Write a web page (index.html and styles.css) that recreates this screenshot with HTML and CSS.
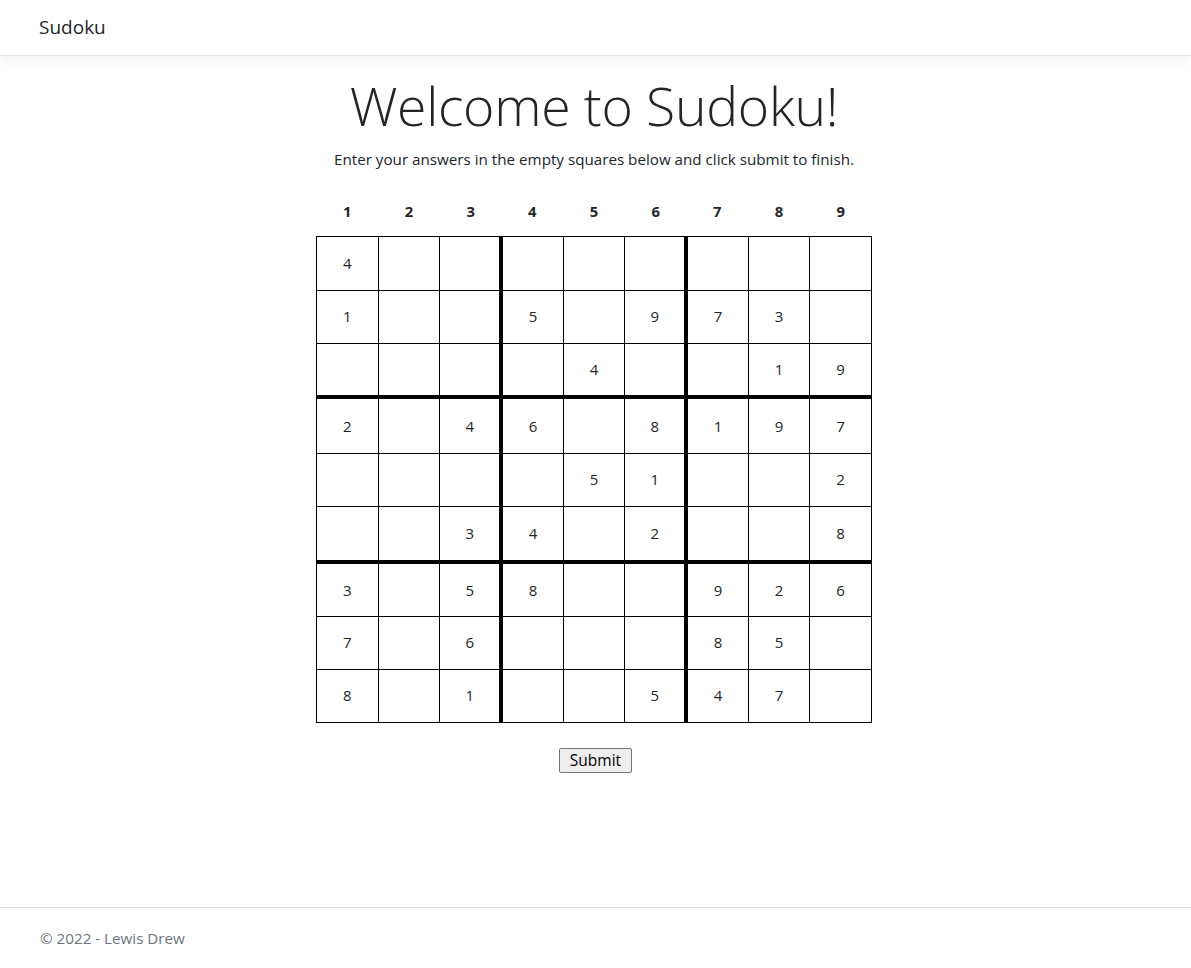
FILE: index.html
```html
<!DOCTYPE html>
<html lang="en">
<head>
<meta charset="utf-8">
<title>Sudoku</title>
<link rel="stylesheet" href="styles.css">
</head>
<body>
<div class="page">
  <header class="navbar">
    <a class="brand" href="#">Sudoku</a>
  </header>
  <main class="main">
    <h1 class="title">Welcome to Sudoku!</h1>
    <p class="lead">Enter your answers in the empty squares below and click submit to finish.</p>
    <table class="grid">
      <thead>
        <tr><th>1</th><th>2</th><th>3</th><th>4</th><th>5</th><th>6</th><th>7</th><th>8</th><th>9</th></tr>
      </thead>
      <tbody>
        <tr class="first"><td>4</td><td></td><td class="tr"></td><td></td><td></td><td class="tr"></td><td></td><td></td><td></td></tr>
        <tr><td>1</td><td></td><td class="tr"></td><td>5</td><td></td><td class="tr">9</td><td>7</td><td>3</td><td></td></tr>
        <tr class="tb"><td></td><td></td><td class="tr"></td><td></td><td>4</td><td class="tr"></td><td></td><td>1</td><td>9</td></tr>
        <tr class="after"><td>2</td><td></td><td class="tr">4</td><td>6</td><td></td><td class="tr">8</td><td>1</td><td>9</td><td>7</td></tr>
        <tr><td></td><td></td><td class="tr"></td><td></td><td>5</td><td class="tr">1</td><td></td><td></td><td>2</td></tr>
        <tr class="tb tb-low"><td></td><td></td><td class="tr">3</td><td>4</td><td></td><td class="tr">2</td><td></td><td></td><td>8</td></tr>
        <tr class="after-low"><td>3</td><td></td><td class="tr">5</td><td>8</td><td></td><td class="tr"></td><td>9</td><td>2</td><td>6</td></tr>
        <tr><td>7</td><td></td><td class="tr">6</td><td></td><td></td><td class="tr"></td><td>8</td><td>5</td><td></td></tr>
        <tr><td>8</td><td></td><td class="tr">1</td><td></td><td></td><td class="tr">5</td><td>4</td><td>7</td><td></td></tr>
      </tbody>
    </table>
    <div class="actions"><button class="submit" type="button">Submit</button></div>
  </main>
  <footer class="footer">© 2022 - Lewis Drew</footer>
</div>
</body>
</html>
```

FILE: styles.css
```css
* { box-sizing: border-box; }
html, body { margin: 0; padding: 0; }
body {
  font-family: "Open Sans", "Noto Sans", sans-serif;
  font-size: 15px;
  line-height: 1.5;
  color: #212529;
  background: #fff;
}
.page {
  min-height: 100vh;
  display: flex;
  flex-direction: column;
}
.navbar {
  height: 56px;
  border-bottom: 1px solid #dee2e6;
  box-shadow: 0 4px 12px rgba(0,0,0,0.05);
  display: flex;
  align-items: center;
  padding: 0 39px;
}
.brand {
  font-size: 19px;
  color: #212529;
  text-decoration: none;
  line-height: 1;
}
.main {
  flex: 1;
  display: flex;
  flex-direction: column;
  align-items: center;
}
.title {
  font-weight: 300;
  font-size: 53.5px;
  line-height: 1.2;
  margin: 18px 0 9px;
  letter-spacing: -0.3px;
  margin-left: -3px;
}
.lead {
  margin: 0 0 17px;
  line-height: 24px;
  font-size: 15.2px;
  margin-left: -3px;
}
.grid {
  border-collapse: collapse;
  margin-left: -3px;
  width: 556px;
  table-layout: fixed;
}
.grid th {
  height: 48px;
  font-weight: 700;
  font-size: 14.8px;
  text-align: center;
  padding: 0 0 1px;
}
.grid td {
  height: 53px;
  border: 1px solid #000;
  text-align: center;
  vertical-align: middle;
  padding: 0;
  font-size: 15px;
}
.grid tr.first td { height: 54px; }
.grid tr.after td { height: 56px; }
.grid tr.after-low td { height: 54px; }
.grid td.tr { border-right: 4px solid #000; }
.grid tr.tb td { border-bottom: 4px solid #000; height: 54px; }
.grid tr.tb-low td { height: 56px; }
.actions {
  margin-top: 25px;
}
.submit {
  font-family: "Open Sans", "Noto Sans", sans-serif;
  font-size: 15.5px;
  line-height: 19px;
  padding: 2px 10px 2px;
  background: #efefef;
  border: 1px solid #767676;
  border-radius: 2px;
  color: #000;
  height: 25px;
}
.footer {
  border-top: 1px solid #dee2e6;
  line-height: 60px;
  padding: 0 40px;
  color: #6c757d;
  font-size: 15.2px;
}
```
